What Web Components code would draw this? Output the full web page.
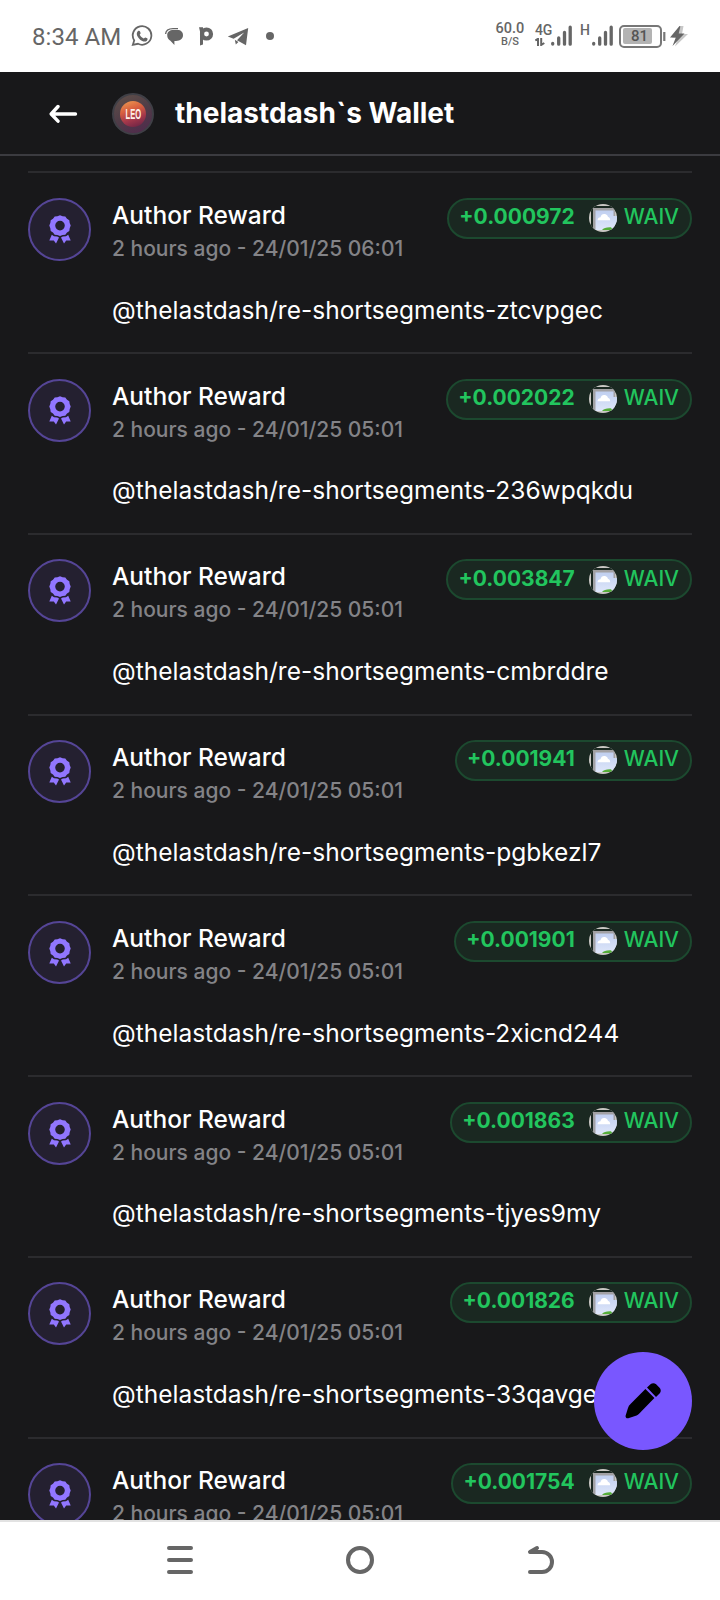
<!DOCTYPE html>
<html lang="en">
<head>
<meta charset="utf-8">
<title>Wallet</title>
<style>
body{margin:0;background:#18181a}
</style>
</head>
<body>
<wallet-app></wallet-app>
<script>
const define = (name, html, setup) => {
  const t = document.createElement('template');
  t.innerHTML = html;
  customElements.define(name, class extends HTMLElement {
    constructor() {
      super();
      this.attachShadow({mode: 'open'}).append(t.content.cloneNode(true));
    }
    connectedCallback() { if (setup) setup(this, this.shadowRoot); }
  });
};

define('status-bar', `
<style>
:host{display:flex;height:72px;box-sizing:border-box;background:#fff;color:#666;font-family:Roboto,sans-serif;padding-left:32px;padding-right:32px;align-items:flex-start}
.time{font-size:24px;line-height:28px;padding-top:23px;width:99px;white-space:nowrap;letter-spacing:.06px}
svg{display:block;flex:none}
.icons{padding-top:24px}
.rate{margin-left:auto;text-align:center;width:30px;padding-top:21px;white-space:nowrap}
.rate b{display:block;font:500 14.500px/15px Roboto,sans-serif}
.rate i{display:block;font:500 11px/11px Roboto,sans-serif}
.net{padding-top:23px;margin-left:10px;width:16px;font:500 14px/15px Roboto,sans-serif;white-space:nowrap;letter-spacing:-.3px;flex:none}
.net.h{margin-left:8px;width:12px}
.bars{margin-top:25px}
.batt{flex:none;margin:24.500px 0 0 6px;width:43px;height:23px;box-sizing:border-box;border:2px solid #777;border-radius:5px;padding:1.500px;display:flex}
.batt span{width:29px;background:#b3b3b3;border-radius:2px;font:500 15px/16px Roboto,sans-serif;text-align:center;color:#555;text-indent:5px;white-space:nowrap}
.bolt{margin-top:25px}
</style>
<div class="time">8:34 AM</div>
<svg class="icons" width="145" height="24" viewBox="131 24 145 24" fill="#666">
<path d="M132.800 44.900 134.200 40.400A9.300 9.300 0 1 1 138 43.800Z" fill="none" stroke="#666" stroke-width="1.800"/>
<path d="M138 31.100c.8-.8 1.700-.5 2 .3l.6 1.600c.2.7-.9 1.200-.8 1.700.7 1.700 2.200 3 3.900 3.700.5.1 1.100-1.200 1.700-1l1.800.9c.7.4.3 1.800-.3 2.400-1.200 1.200-3 1-4.700.2-2.500-1.100-4.300-3.200-5.100-5.400-.6-1.700-.3-3.300.9-4.400Z"/>
<path d="M165.600 34c.2-3.500 3.400-5.400 7.400-5.400h5" fill="none" stroke="#666" stroke-width="1.300"/>
<path d="M167.200 35c0-3 2.400-5 6.300-5h4c3.400 0 5.500 2 5.500 5.200 0 3.400-2.700 5.500-7 5.800h-1.600v4l-4-4.300c-2-.9-3.200-3-3.200-5.700Z"/>
<path d="M199 27.200h4v17.400l-3 .8v-14Z"/>
<circle cx="206.500" cy="34" r="4.500" fill="none" stroke="#666" stroke-width="4.200"/>
<path d="M227.800 36.400 248.200 28 246 45.200 237 40.300 244.200 32.400 233.600 38.800Z"/>
<path d="m234.800 39.800 3.600 2.300-2.600 2.300Z"/>
<circle cx="270" cy="36" r="4"/>
</svg>
<div class="rate"><b>60.0</b><i>B/S</i></div>
<div class="net">4G<svg width="10" height="8" viewBox="0 0 10 8" fill="none" stroke="#666" stroke-width="2"><path d="M.3 2.500 3 .8V8M6.200 0V7L9.300 5"/></svg></div>
<svg class="bars" width="21" height="22" viewBox="0 0 21 22" stroke="#666" stroke-width="3.300" stroke-linecap="round"><path d="M1.700 18.500v.6M7.700 13v6.200M13.500 7.500v11.700M19.200 2.200v17"/></svg>
<div class="net h">H</div>
<svg class="bars" width="21" height="22" viewBox="0 0 21 22" stroke="#666" stroke-width="3.300" stroke-linecap="round"><path d="M1.700 18.500v.6M7.700 13v6.200M13.500 7.500v11.700M19.200 2.200v17"/></svg>
<div class="batt"><span>81</span></div>
<svg class="bolt" width="26" height="22" viewBox="0 0 26 22"><path d="M1.200 7h2.200v9H1.200Z" fill="#777"/><path d="m19 1-9 12h6l-3 8.500L26 9h-6l1.500-8Z" fill="#c8c8c8"/><path d="M17.500 1 8 12.500h5.800L10.500 21 22.500 8.500h-5.800L18.500 1Z" fill="#666"/></svg>
`);

define('user-avatar', `
<style>
:host{display:block;width:42px;height:42px;flex:none}
.ring{width:42px;height:42px;box-sizing:border-box;border:2px solid #3f3f46;border-radius:50%;background:linear-gradient(155deg,#605049,#4f3c47 50%,#50284d);display:flex;align-items:center;justify-content:center}
.coin{width:26px;height:26px;border-radius:50%;background:linear-gradient(160deg,#efa052,#d9603f 35%,#a3374b 65%,#602044);display:flex;align-items:center;justify-content:center;font:700 14px/26px "Liberation Sans",sans-serif;color:#fff0e8}
.coin span{transform:scaleX(.54);margin:0 -4px}
</style>
<div class="ring"><div class="coin"><span>LEO</span></div></div>`);

define('page-header', `
<style>
:host{display:flex;align-items:center;height:84px;box-sizing:border-box;border-bottom:2px solid #3b3b40;padding-left:49px;color:#fff}
svg{display:block;width:29px;height:20px;margin:2px 34px 0 0}
user-avatar{margin-top:2px}
h1{margin:0 0 0 21px;font:700 28px/42px Inter,sans-serif;white-space:nowrap}
</style>
<svg viewBox="0 0 29 20" fill="none" stroke="#fff" stroke-width="3.400" stroke-linecap="round" stroke-linejoin="round"><path d="M9 2.500 2.200 10 9 17.200M2.500 10H26.500"/></svg>
<user-avatar></user-avatar>
<h1><slot></slot></h1>`);

define('token-badge', `
<style>
:host{display:flex;height:41px;box-sizing:border-box;border:2px solid #1c492f;border-radius:21px;background:#1a2821;color:#22c55e;padding:.2px 11px 0 10.500px;font:500 21px/33px Inter,sans-serif;white-space:nowrap}
b{font-weight:700}
svg{width:28px;height:28px;margin:4px 7px 0 14px;flex:none}
</style>
<b><slot></slot></b>
<svg viewBox="0 0 28 28"><defs><clipPath id="c"><circle cx="14" cy="14" r="14"/></clipPath><linearGradient id="g" x2="0" y2="1"><stop stop-color="#c0cff0"/><stop offset="1" stop-color="#dfe7fa"/></linearGradient></defs>
<g clip-path="url(#c)"><path fill="#c9c7c3" d="M0 0h28v28H0Z"/><path fill="#1a2821" d="M2 2h24v2H4v22H2Z"/><path fill="#a2a1a4" d="M4 4h22v22H4Z"/><path fill="url(#g)" d="M6.500 6.500H24.500V12H28V26H6.500Z"/><path fill="#fff" d="M8.500 16.200c0-2 1.500-3 3-3 .4-2.300 2-3.500 4-3.300 1.900.1 3.200 1.300 3.500 3 1.300.1 2.200 1.300 2.200 3.300Z"/><path fill="#55ad39" d="M13 26c1.500-2 4.500-3 9-2.800L24 26Z"/></g></svg>
<span>WAIV</span>`);

define('reward-row', `
<style>
:host{display:grid;grid-template-columns:63px 1fr auto;height:180.730px;box-sizing:border-box;border-top:2px solid #2b2b2e;padding-top:24.450px;column-gap:21px;align-items:start;color:#fff;font-family:Inter,sans-serif}
.icon{width:63px;height:63px;box-sizing:border-box;border:2px solid #554596;border-radius:50%;background:#242030;display:flex;align-items:center;justify-content:center}
.icon svg{width:22px;height:29px}
.t{font-size:24.500px;line-height:35px;font-weight:500;white-space:nowrap}
.s{font-size:21px;line-height:31px;font-weight:500;color:#838387;white-space:nowrap}
.m{font-size:24.500px;line-height:35px;margin-top:28.850px;white-space:nowrap;width:0}
</style>
<div class="icon"><svg viewBox="0 0 22 29" fill="#9176ff"><path fill-rule="evenodd" d="m11 .3 2.600 1 2.700.2 1.700 2.200 2.300 1.600.4 2.700 1 2.600-1 2.600-.4 2.700-2.300 1.600-1.700 2.200-2.700.2-2.600 1-2.600-1-2.700-.2-1.700-2.200-2.300-1.600-.4-2.700-1-2.600 1-2.600.4-2.700L4 3.700l1.700-2.200 2.700-.2Zm0 5.500a4.800 4.800 0 1 0 0 9.600 4.800 4.800 0 0 0 0-9.600Z"/><path d="m2.800 19.800 2.200 1.400 3.200.4 1.800.9-3 5.900-2.200-3-4.500.2ZM19.200 19.800 17 21.200l-3.200.4-1.800.9 3 5.900 2.200-3 4.500.2Z"/></svg></div>
<div><div class="t">Author Reward</div><div class="s"><slot name="when"></slot></div><div class="m"><slot></slot></div></div>
<token-badge><slot name="amount"></slot></token-badge>`);

define('compose-button', `
<style>
:host{display:flex;width:98px;height:98px;border-radius:50%;background:#7957ff;align-items:center;justify-content:center}
svg{width:36px;height:36px;display:block}
</style>
<svg viewBox="0 0 36 36"><path d="m20.400 6.100 9 9L16 28.700c-1.200 1.200-2.500 3.100-4.400 3.800L3.300 35.200c-1.700.5-3-.8-2.700-2.400l2.300-7.600c.5-1.700 1.400-3.100 2.600-4.200ZM22 4.600l3.800-3.500C27.300-.2 29.600-.1 31.100 1.300l3.200 3.200c1.800 1.800 1.900 4.200.5 5.700L31 14Z"/></svg>`);

define('nav-bar', `
<style>
:host{display:grid;grid-template-columns:repeat(3,180px);justify-content:center;height:80px;box-sizing:border-box;border-top:2px solid #e2e2e2;padding-bottom:2px;background:#fff;align-items:center;justify-items:center}
svg{display:block;width:30px;height:30px}
</style>
<svg viewBox="0 0 30 30" stroke="#666" stroke-width="4" stroke-linecap="round"><path d="M4 3H26M4 15H26M4 27H26"/></svg>
<svg viewBox="0 0 30 30" fill="none" stroke="#666" stroke-width="4"><circle cx="15" cy="15" r="12"/></svg>
<svg viewBox="0 0 30 30" fill="none" stroke="#666" stroke-width="4" stroke-linecap="round" stroke-linejoin="round"><path d="M12 3 5 7H17a10 10 0 0 1 0 20H5"/></svg>`);

define('wallet-app', `
<style>
:host{display:flex;flex-direction:column;position:relative;width:720px;height:1600px;overflow:hidden;background:#18181a}
main{flex:1;min-height:0;overflow:hidden;padding:15.490px 28px 0}
compose-button{position:absolute;left:594px;top:1352px}
status-bar,page-header,nav-bar{flex:none}
</style>
<status-bar></status-bar><page-header>thelastdash\`s Wallet</page-header><main></main><compose-button></compose-button><nav-bar></nav-bar>`,
(host, root) => {
  const rows = [['000972','@thelastdash/re-shortsegments-ztcvpgec','06'],['002022','@thelastdash/re-shortsegments-236wpqkdu'],['003847','@thelastdash/re-shortsegments-cmbrddre'],['001941','@thelastdash/re-shortsegments-pgbkezl7'],['001901','@thelastdash/re-shortsegments-2xicnd244'],['001863','@thelastdash/re-shortsegments-tjyes9my'],['001826','@thelastdash/re-shortsegments-33qavge'],['001754','']];
  root.querySelector('main').innerHTML = rows.map(([n, memo, h]) =>
    `<reward-row><span slot="when">2 hours ago - 24/01/25 ${h || '05'}:01</span><span slot="amount">+0.${n}</span>${memo}</reward-row>`).join('');
});
</script>
</body>
</html>
